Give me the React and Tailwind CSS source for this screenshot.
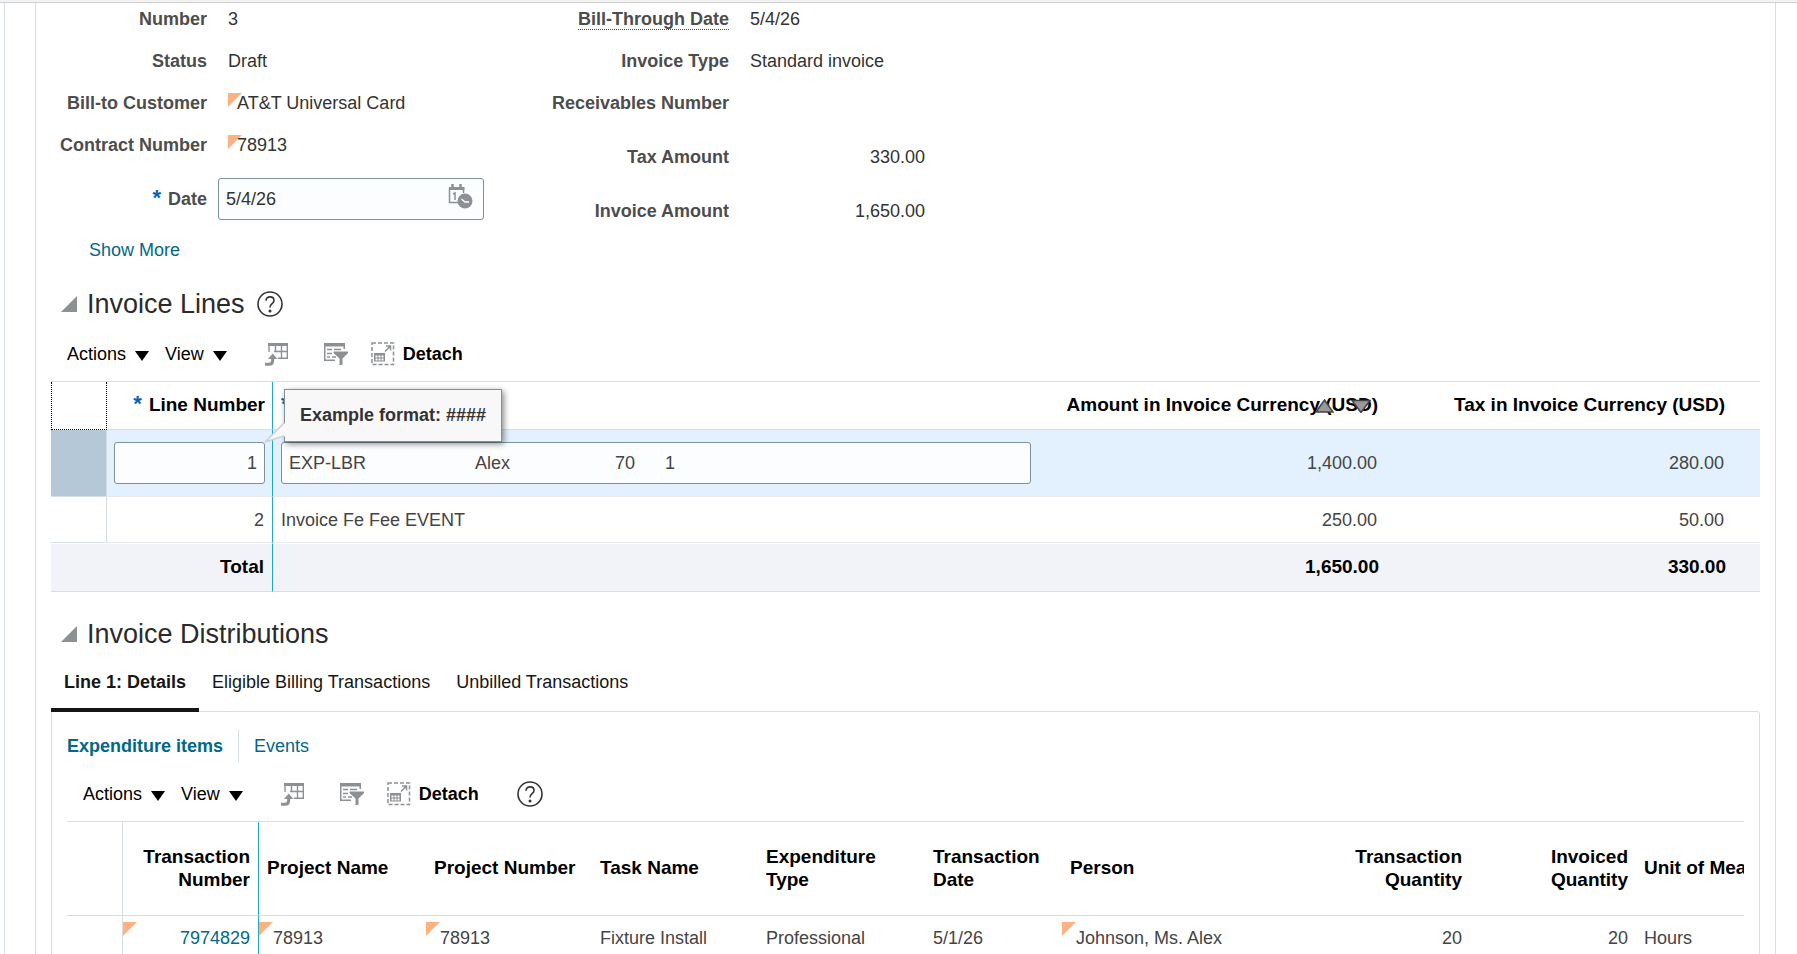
import { useState } from "react";

const LINES = [
  { id: 1, desc: "EXP-LBR                      Alex                     70      1", amount: "1,400.00", tax: "280.00" },
  { id: 2, desc: "Invoice Fe Fee EVENT", amount: "250.00", tax: "50.00" },
];

const TABS = ["Line 1: Details", "Eligible Billing Transactions", "Unbilled Transactions"];

function Corner({ className }) {
  return (
    <svg className={className} width="14" height="14" viewBox="0 0 14 14" aria-hidden="true">
      <path d="M0 0h14L0 14z" fill="#ffb27f" />
    </svg>
  );
}

function Caret() {
  return (
    <svg width="14" height="10" viewBox="0 0 14 10" className="mt-1" aria-hidden="true">
      <path d="M0 0h14L7 10z" fill="#000" />
    </svg>
  );
}

function HelpIcon() {
  return (
    <svg width="26" height="26" viewBox="0 0 26 26" fill="none" stroke="#333" strokeWidth="1.6" aria-hidden="true">
      <circle cx="13" cy="13" r="12" />
      <path d="M9 9.8c0-2.4 1.8-3.9 4-3.9s4 1.4 4 3.6c0 3.2-4 3.3-4 6.9" />
      <circle cx="13" cy="20" r="0.7" fill="#333" />
    </svg>
  );
}

function GoToTopIcon() {
  return (
    <svg width="24" height="24" viewBox="0 0 24 24" aria-hidden="true">
      <path d="M3 1h20v3H3z" fill="#8d9194" />
      <path d="M4 3v7M10.500 3v7M16.500 3v14M22.300 3v14M9 9.500h13M13 16.300h10" fill="none" stroke="#8d9194" strokeWidth="1.400" />
      <path d="M0 22.300h4q3.700 0 3.700-4V15" fill="none" stroke="#8d9194" strokeWidth="3" />
      <path d="M3 17l4.700-5.500L12.500 17z" fill="#8d9194" />
    </svg>
  );
}

function FilterIcon() {
  return (
    <svg width="24" height="24" viewBox="0 0 24 24" aria-hidden="true">
      <path d="M0 1h21v6h-1.500V4.500h-18v13H11V19H0z" fill="#8d9194" />
      <path d="M3 7.500h5M10 7.500h7M3 11.500h5M3 15h3M8 15h4" stroke="#8d9194" strokeWidth="1.500" />
      <path d="M9.500 9.500h14.500v1.500l-5.500 5.500v6.500h-3v-6.500L9.500 11z" fill="#8d9194" />
    </svg>
  );
}

function DetachIcon() {
  return (
    <svg width="24" height="24" viewBox="0 0 24 24" fill="none" aria-hidden="true">
      <rect x="1" y="1" width="21.500" height="21.500" stroke="#8d9194" strokeWidth="1.500" strokeDasharray="4 2" />
      <path d="M3 11h11v8.500H3z" fill="#8d9194" />
      <path d="M4.500 13.500h2v2h-2zM7.500 13.500h2v2h-2zM10.500 13.500h2v2h-2zM4.500 16.500h2v2h-2zM7.500 16.500h2v2h-2zM10.500 16.500h2v2h-2z" fill="#fff" />
      <path d="M14 9.500l5-5M15 4h4.500v4.500" stroke="#8d9194" strokeWidth="1.500" />
    </svg>
  );
}

function CalendarClockIcon() {
  return (
    <svg width="25" height="25" viewBox="0 0 25 25" fill="none" aria-hidden="true">
      <path d="M1.500 4v14.500H10M15.500 4v5" stroke="#8d9194" strokeWidth="1.500" />
      <path d="M1 3h15.500v3H1z" fill="#8d9194" />
      <path d="M4.500 0v4M12.500 0v4" stroke="#8d9194" strokeWidth="2.500" />
      <path d="M5 10l2-1v7" stroke="#8d9194" strokeWidth="1.500" />
      <circle cx="17" cy="17" r="7.500" fill="#8d9194" />
      <path d="M13.500 15l3.500 3h4" stroke="#fff" strokeWidth="1.300" />
    </svg>
  );
}

function Toolbar({ children }) {
  return (
    <div className="mt-4 mb-[11px] flex h-8 items-center text-black">
      <button className="flex items-center gap-[9px]">Actions <Caret /></button>
      <button className="ml-4 flex items-center gap-[9px]">View <Caret /></button>
      <button className="ml-[38px]" aria-label="Go to top"><GoToTopIcon /></button>
      <button className="ml-[35px]" aria-label="Query by example"><FilterIcon /></button>
      <button className="ml-[23px] flex items-center gap-2 font-bold"><DetachIcon /> Detach</button>
      {children}
    </div>
  );
}

function SectionTitle({ title, help }) {
  return (
    <div className="mt-6 flex h-9 items-center pl-[9px]">
      <button aria-label={`Collapse ${title}`}>
        <svg width="17" height="17" viewBox="0 0 17 17" aria-hidden="true">
          <path d="M17 0v16H1z" fill="#8d9194" />
        </svg>
      </button>
      <h2 className="ml-2.5 text-[27px] text-[#2b2b2b]">{title}</h2>
      {help && <button className="ml-3" aria-label="Help"><HelpIcon /></button>}
    </div>
  );
}

function Field({ label, children }) {
  return (
    <div className="flex h-[42px] items-center">
      <dt className="w-[156px] shrink-0 text-right font-bold text-[#4d4d4d] group-data-wide:w-[180px]">{label}</dt>
      <dd className="ml-[21px]">{children}</dd>
    </div>
  );
}

function Amount({ label, children }) {
  return (
    <div className="flex h-[54px] items-center">
      <dt className="w-[180px] shrink-0 text-right font-bold text-[#4d4d4d]">{label}</dt>
      <dd className="ml-[21px] w-[175px] text-right">{children}</dd>
    </div>
  );
}

function Linked({ children }) {
  return (
    <span className="relative pl-[9px]">
      <Corner className="absolute top-0 left-0" />
      <span className="relative">{children}</span>
    </span>
  );
}

function Star() {
  return <span className="mr-[7px] inline-block align-top text-[22px] leading-[22px] text-[#0a63b0]">*</span>;
}

function InvoiceHeader() {
  const [date, setDate] = useState("5/4/26");

  return (
    <section className="-mt-[5px] flex">
      <div className="w-[498px]">
        <dl>
          <Field label="Number">3</Field>
          <Field label="Status">Draft</Field>
          <Field label="Bill-to Customer"><Linked>AT&amp;T Universal Card</Linked></Field>
          <Field label="Contract Number"><Linked>78913</Linked></Field>
        </dl>
        <div className="mt-1.5 flex h-[54px] items-center">
          <label htmlFor="invoice-date" className="w-[156px] text-right font-bold text-[#4d4d4d]"><Star />Date</label>
          <div className="relative ml-[11px] w-[266px]">
            <input
              id="invoice-date"
              className="block h-[42px] w-full rounded-[3px] border border-[#7b919c] bg-[#fcfdff] px-[7px] text-[#333] outline-none"
              value={date}
              onChange={(e) => setDate(e.target.value)}
            />
            <button className="absolute top-1.5 right-[11px]" aria-label="Select date"><CalendarClockIcon /></button>
          </div>
        </div>
        <a href="#more" className="mt-3 ml-[38px] block w-fit text-[#00688c]">Show More</a>
      </div>
      <dl className="group" data-wide>
        <Field label={<span className="border-b border-dotted border-[#4d4d4d]">Bill-Through Date</span>}>5/4/26</Field>
        <Field label="Invoice Type">Standard invoice</Field>
        <Field label="Receivables Number" />
        <div className="mt-1.5">
          <Amount label="Tax Amount">330.00</Amount>
          <Amount label="Invoice Amount">1,650.00</Amount>
        </div>
      </dl>
    </section>
  );
}

function InvoiceLines() {
  const [lineNo, setLineNo] = useState("1");
  const [desc, setDesc] = useState(LINES[0].desc);
  const input = "block h-[42px] w-full rounded-[3px] border border-[#7b919c] bg-[#fcfdff] px-[7px] text-[#444] outline-none";

  return (
    <div className="relative">
      <table className="w-full table-fixed border-separate border-spacing-0 border-t border-[#d6dfe6]">
        <colgroup>
          <col className="w-[56px]" />
          <col className="w-[166px]" />
          <col />
          <col className="w-[347px]" />
          <col className="w-[347px]" />
          <col className="w-[27px]" />
        </colgroup>
        <thead>
          <tr className="h-[48px] text-[19px] text-black">
            <td className="border-x border-b border-dotted border-black" />
            <th className="border-r border-b border-[#d6dfe6] border-r-[#1ba9cc] pr-[7px] pb-0.5 text-right"><Star />Line Number</th>
            <th className="border-b border-[#d6dfe6] pb-0.5 pl-2 text-left"><Star /></th>
            <th className="relative border-b border-[#d6dfe6] pr-2 pb-0.5 text-right">
              Amount in Invoice Currency (USD)
              <svg className="absolute top-[17px] right-[15px]" width="56" height="14" viewBox="0 0 56 14" aria-hidden="true">
                <path d="M9.500 1l8.500 12H1z" fill="#999" stroke="#444" strokeWidth="1.500" />
                <path d="M37 1.500h18l-9 12z" fill="#999" stroke="#444" strokeWidth="1.500" />
              </svg>
            </th>
            <th className="border-b border-[#d6dfe6] pr-2 pb-0.5 text-right">Tax in Invoice Currency (USD)</th>
            <td className="border-b border-[#d6dfe6]" />
          </tr>
        </thead>
        <tbody className="text-[#444]">
          <tr className="h-[67px] bg-[#e3f1fe]">
            <td className="border-r border-b border-[#d6dfe6] bg-[#b5c8d8]" />
            <td className="border-r border-b border-[#e6eaee] border-r-[#1ba9cc] px-[7px]">
              <input className={`${input} text-right`} aria-label="Line Number" value={lineNo} onChange={(e) => setLineNo(e.target.value)} />
            </td>
            <td className="border-b border-[#e6eaee] px-2">
              <input className={input} aria-label="Line description" value={desc} onChange={(e) => setDesc(e.target.value)} />
            </td>
            <td className="border-b border-[#e6eaee] pr-[9px] text-right">{LINES[0].amount}</td>
            <td className="border-b border-[#e6eaee] pr-[9px] text-right">{LINES[0].tax}</td>
            <td className="border-b border-[#e6eaee]" />
          </tr>
          <tr className="h-[46px]">
            <td className="border-r border-b border-[#d6dfe6]" />
            <td className="border-r border-b border-[#e6eaee] border-r-[#1ba9cc] pr-2 text-right">{LINES[1].id}</td>
            <td className="border-b border-[#e6eaee] pl-2">{LINES[1].desc}</td>
            <td className="border-b border-[#e6eaee] pr-[9px] text-right">{LINES[1].amount}</td>
            <td className="border-b border-[#e6eaee] pr-[9px] text-right">{LINES[1].tax}</td>
            <td className="border-b border-[#e6eaee]" />
          </tr>
        </tbody>
        <tfoot>
          <tr className="h-[49px] bg-[#f2f3f8] text-[19px] font-bold text-black">
            <td className="border-t border-b border-t-white border-b-[#d6dfe6]" />
            <td className="border-t border-r border-b border-t-white border-r-[#1ba9cc] border-b-[#d6dfe6] pr-2 pb-0.5 text-right">Total</td>
            <td className="border-t border-b border-t-white border-b-[#d6dfe6]" />
            <td className="border-t border-b border-t-white border-b-[#d6dfe6] pr-[7px] pb-0.5 text-right">1,650.00</td>
            <td className="border-t border-b border-t-white border-b-[#d6dfe6] pr-[7px] pb-0.5 text-right">330.00</td>
            <td className="border-t border-b border-t-white border-b-[#d6dfe6]" />
          </tr>
        </tfoot>
      </table>

      {/* Format hint for the focused cell */}
      <div role="tooltip" className="absolute top-2 left-[233px] flex h-[53px] items-center border border-[#7b919c] bg-[#f8f8f8] px-[15px] pb-0.5 font-bold text-[#333] shadow-[2px_2px_6px_rgba(0,0,0,0.45)]">
        Example format: ####
        <svg className="absolute top-[32px] -left-[21px]" width="22" height="22" viewBox="0 0 22 22" aria-hidden="true">
          <path d="M22 0L1 20L22 14z" fill="#f8f8f8" />
          <path d="M20 1L1 20L20 14" fill="none" stroke="#c9d2d8" strokeWidth="1.500" />
        </svg>
      </div>
    </div>
  );
}

function ExpenditureTable() {
  const th = "border-b border-[#d6dfe6] px-2 pb-0.5 leading-[23px]";
  const left = `${th} text-left`;
  const right = `${th} text-right`;

  return (
    <table className="w-full table-fixed border-separate border-spacing-0 border-t border-[#d6dfe6]">
      <colgroup>
        <col className="w-[56px]" />
        <col className="w-[136px]" />
        <col className="w-[167px]" />
        <col className="w-[166px]" />
        <col className="w-[166px]" />
        <col className="w-[167px]" />
        <col className="w-[137px]" />
        <col className="w-[241px]" />
        <col className="w-[167px]" />
        <col className="w-[166px]" />
        <col />
      </colgroup>
      <thead>
        <tr className="h-[94px] text-[19px] text-black">
          <td className="border-r border-b border-[#d6dfe6]" />
          <th className={`${right} border-r border-r-[#1ba9cc]`}>Transaction Number</th>
          <th className={left}>Project Name</th>
          <th className={left}>Project Number</th>
          <th className={left}>Task Name</th>
          <th className={left}>Expenditure Type</th>
          <th className={left}>Transaction Date</th>
          <th className={left}>Person</th>
          <th className={right}>Transaction<br />Quantity</th>
          <th className={right}>Invoiced<br />Quantity</th>
          <th className={`${left} overflow-hidden pr-0 whitespace-nowrap`}>Unit of Measure</th>
        </tr>
      </thead>
      <tbody className="text-[#444]">
        <tr className="h-[44px]">
          <td className="border-r border-[#d6dfe6]" />
          <td className="relative border-r border-[#1ba9cc] px-2 text-right">
            <Corner className="absolute top-1.5 left-0" />
            <a href="#transaction" className="text-[#00688c]">7974829</a>
          </td>
          <td className="relative pl-3.5"><Corner className="absolute top-1.5 left-0" />78913</td>
          <td className="relative pl-3.5"><Corner className="absolute top-1.5 left-0" />78913</td>
          <td className="px-2">Fixture Install</td>
          <td className="px-2">Professional</td>
          <td className="px-2">5/1/26</td>
          <td className="relative pl-3.5"><Corner className="absolute top-1.5 left-0" />Johnson, Ms. Alex</td>
          <td className="px-2 text-right">20</td>
          <td className="px-2 text-right">20</td>
          <td className="px-2">Hours</td>
        </tr>
      </tbody>
    </table>
  );
}

export default function App() {
  const [tab, setTab] = useState(0);

  return (
    <div className="flex h-screen overflow-hidden border-t-2 border-[#f2f2f2] bg-white font-['Liberation_Sans',Arial,sans-serif] text-[18px] leading-6 text-[#333]">
      <div className="flex min-w-0 grow border-t border-[#cfcfcf] pr-[21px] pl-1">
        <div className="flex min-w-0 grow border-l border-[#d6dfe6] pl-[30px]">
          <main className="min-w-0 grow border-x border-[#d6dfe6] px-[15px]">
            <InvoiceHeader />

            <SectionTitle title="Invoice Lines" help />
            <div className="pl-4">
              <Toolbar />
            </div>
            <InvoiceLines />

            <SectionTitle title="Invoice Distributions" />
            <div className="flex">
              {TABS.map((name, i) => (
                <button
                  key={name}
                  onClick={() => setTab(i)}
                  className={
                    i === tab
                      ? "relative -mb-px h-[60px] border-b-4 border-[#161616] px-[13px] pt-1 font-bold text-[#161616]"
                      : "-mb-px h-[60px] border-b-4 border-transparent px-[13px] pt-1 text-[#161616]"
                  }
                >
                  {name}
                </button>
              ))}
            </div>
            <div className="min-h-80 rounded-tr-[3px] border border-[#d6dfe6] px-[15px] pt-[18px]">
              <div className="flex h-8 items-center">
                <a href="#items" className="flex h-8 items-center border-r border-[#d6dfe6] pr-[15px] font-bold text-[#00688c]">Expenditure items</a>
                <a href="#events" className="pl-[15px] text-[#00688c]">Events</a>
              </div>
              <div className="pl-4">
                <Toolbar>
                  <button className="ml-[38px]" aria-label="Help"><HelpIcon /></button>
                </Toolbar>
              </div>
              <ExpenditureTable />
            </div>
          </main>
        </div>
      </div>
    </div>
  );
}
